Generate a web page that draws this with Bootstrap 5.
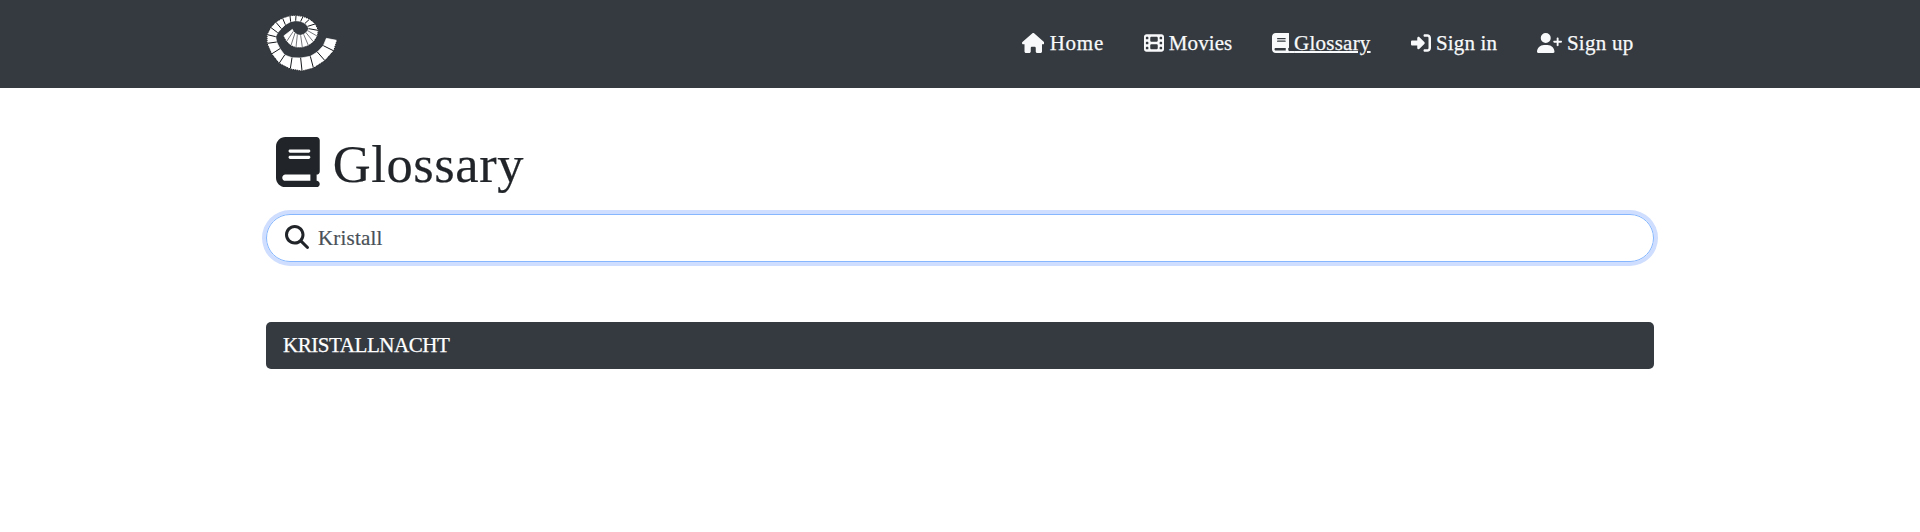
<!DOCTYPE html>
<html lang="en">
<head>
<meta charset="utf-8">
<meta name="viewport" content="width=device-width, initial-scale=1">
<title>Glossary</title>
<link href="https://cdn.jsdelivr.net/npm/bootstrap@5.3.0/dist/css/bootstrap.min.css" rel="stylesheet">
<style>
  body { font-family: Georgia, "Liberation Serif", serif; font-size: 21px; line-height: 30px; background: #fff; color: #212529; }
  .page-wrap { width: 1388px; max-width: 100%; margin: 0 auto; }
  .site-bar { background: #343a40; height: 88px; }
  .site-logo { width: 84px; height: 70px; margin: -2px 0 0 -6px; display: block; }
  .site-links { gap: 40px; padding-right: 21px; margin-bottom: 2px; -webkit-text-stroke: .25px; }
  .site-link { color: #f8f9fa; text-decoration: none; display: flex; white-space: pre; }
  .site-link svg { height: 20px; flex: none; margin-top: 5px; fill: currentColor; }
  .site-link span { display: block; padding-left: 5.3px; margin-right: -.5px; }
  .site-link.active span { text-decoration: underline; text-decoration-thickness: 2px; text-underline-offset: 1px; }
  .page-title { font-size: 52.5px; line-height: 58px; letter-spacing: .6px; font-weight: 400; margin: 47px 0 0; padding-left: 10px; -webkit-text-stroke: .2px; }
  .page-title svg { width: 43.75px; height: 50px; margin-right: 13px; margin-top: 2px; }
  .search-box { height: 48px; margin-top: 21px; border: 1px solid #86b7fe; border-radius: 24px; box-shadow: 0 0 0 4px #cfdefe; padding-left: 18px; }
  .search-box svg { margin-bottom: 2px; }
  .search-box input { border: 0; outline: 0; background: none; color: #495057; letter-spacing: .2px; padding: 0 0 0 9px; flex: 1; -webkit-text-stroke: .2px; }
  .term { height: 47px; margin-top: 60px; background: #343a40; color: #fff; border-radius: 5px; padding: 0 0 2px 17px; letter-spacing: -.44px; -webkit-text-stroke: .25px; }
</style>
</head>
<body>
<nav class="site-bar">
  <div class="page-wrap h-100 d-flex align-items-center justify-content-between">
    <a href="#" aria-label="Start page">
      <svg class="site-logo" viewBox="0 0 252 210">
        <path fill="#fff" stroke="#fff" stroke-width="2" d="M230 97L220 128L194 157L160 179L126 188L91 182L58 165L36 137L22 106L22 80L33 59L48 43L68 31L90 24L108 23L129 26L148 34L165 48L174 67L171 84L160 101L145 112L127 118L108 118L93 112L80 100L71 84L97 64L100 70L105 75L112 80L122 82L131 79L138 74L143 68L146 62L143 55L135 46L122 40L107 38L92 41L76 50L64 62L53 74L47 86L50 102L60 122L74 141L96 149L122 150L151 145L172 132L190 113L199 91Z"/>
        <path fill="none" stroke="#15181b" stroke-width="3" d="M220 128L190 113M194 157L172 132M160 179L151 145M126 188L122 150M91 182L96 149M58 165L74 141M36 137L60 122M22 106L50 102M22 80L47 86M33 59L53 74M48 43L64 62M68 31L76 50M90 24L92 41M108 23L107 38M129 26L122 40M148 34L135 46M165 48L143 55M174 67L146 62"/>
        <path fill="none" stroke="#30343a" stroke-width="2" d="M171 84L143 68M160 101L138 74M145 112L131 79M127 118L122 82M108 118L112 80M93 112L105 75M80 100L100 70"/>
        <path fill="none" stroke="#15181b" stroke-width="3" stroke-dasharray="3 3" d="M231 97L221 129L195 158L161 180L126 189L91 183L57 166L35 138L21 106L21 80L32 58L47 42L68 30L90 23L108 22L129 25L149 33L166 47L175 67L172 85L161 102L146 113L127 119L108 119L92 113L79 101L70 84"/>
      </svg>
    </a>
    <div class="site-links d-flex">
      <a class="site-link" href="#"><svg viewBox="0 0 576 512"><path d="M575.8 255.5c0 18-15 32.1-32 32.1h-32l.7 160.2c0 2.7-.2 5.4-.5 8.1V472c0 22.1-17.9 40-40 40H456c-1.1 0-2.2 0-3.3-.1c-1.4 .1-2.8 .1-4.2 .1H416 392c-22.1 0-40-17.9-40-40V448 384c0-17.7-14.3-32-32-32H256c-17.7 0-32 14.3-32 32v64 24c0 22.1-17.9 40-40 40H160 128.1c-1.5 0-3-.1-4.5-.2c-1.2 .1-2.4 .2-3.6 .2H104c-22.1 0-40-17.9-40-40V360c0-.9 0-1.9 .1-2.8V287.6H32c-18 0-32-14-32-32.1c0-9 3-17 10-24L266.4 8c7-7 15-8 22-8s15 2 21 7L564.8 231.5c8 7 12 15 11 24z"/></svg><span style="letter-spacing:.77px">Home</span></a>
      <a class="site-link" href="#"><svg viewBox="0 0 512 512"><path d="M0 96C0 60.7 28.7 32 64 32H448c35.3 0 64 28.7 64 64V416c0 35.3-28.7 64-64 64H64c-35.3 0-64-28.7-64-64V96zM48 368v32c0 8.8 7.2 16 16 16H96c8.8 0 16-7.2 16-16V368c0-8.8-7.2-16-16-16H64c-8.8 0-16 7.2-16 16zm368-16c-8.8 0-16 7.2-16 16v32c0 8.8 7.2 16 16 16h32c8.8 0 16-7.2 16-16V368c0-8.8-7.2-16-16-16H416zM48 240v32c0 8.8 7.2 16 16 16H96c8.8 0 16-7.2 16-16V240c0-8.8-7.2-16-16-16H64c-8.8 0-16 7.2-16 16zm368-16c-8.8 0-16 7.2-16 16v32c0 8.8 7.2 16 16 16h32c8.8 0 16-7.2 16-16V240c0-8.8-7.2-16-16-16H416zM48 112v32c0 8.8 7.2 16 16 16H96c8.8 0 16-7.2 16-16V112c0-8.8-7.2-16-16-16H64c-8.8 0-16 7.2-16 16zM416 96c-8.8 0-16 7.2-16 16v32c0 8.8 7.2 16 16 16h32c8.8 0 16-7.2 16-16V112c0-8.8-7.2-16-16-16H416zM160 128v64c0 17.7 14.3 32 32 32H320c17.7 0 32-14.3 32-32V128c0-17.7-14.3-32-32-32H192c-17.7 0-32 14.3-32 32zm32 160c-17.7 0-32 14.3-32 32v64c0 17.7 14.3 32 32 32H320c17.7 0 32-14.3 32-32V320c0-17.7-14.3-32-32-32H192z"/></svg><span style="letter-spacing:.07px">Movies</span></a>
      <a class="site-link active" href="#"><svg viewBox="0 0 448 512"><path d="M96 0C43 0 0 43 0 96V416c0 53 43 96 96 96H384h32c17.7 0 32-14.3 32-32s-14.3-32-32-32V384c17.7 0 32-14.3 32-32V32c0-17.7-14.3-32-32-32H384 96zm0 384H352v64H96c-17.7 0-32-14.3-32-32s14.3-32 32-32zm32-240c0-8.8 7.2-16 16-16H336c8.8 0 16 7.2 16 16s-7.2 16-16 16H144c-8.8 0-16-7.2-16-16zm16 48H336c8.8 0 16 7.2 16 16s-7.2 16-16 16H144c-8.8 0-16-7.2-16-16s7.2-16 16-16z"/></svg><span class="m-0" style="letter-spacing:.23px;padding:0"><span class="d-inline m-0" style="letter-spacing:-.45px;padding:0"> </span>Glossary</span></a>
      <a class="site-link" href="#"><svg viewBox="0 0 512 512"><path d="M217.9 105.9L340.7 228.7c7.2 7.2 11.3 17.1 11.3 27.3s-4.1 20.1-11.3 27.3L217.9 406.1c-6.4 6.4-15 9.9-24 9.9c-18.7 0-33.9-15.2-33.9-33.9l0-62.1L32 320c-17.7 0-32-14.3-32-32l0-64c0-17.7 14.3-32 32-32l128 0 0-62.1c0-18.7 15.2-33.9 33.9-33.9c9 0 17.6 3.6 24 9.9zM352 416l64 0c17.7 0 32-14.3 32-32l0-256c0-17.7-14.3-32-32-32l-64 0c-17.7 0-32-14.3-32-32s14.3-32 32-32l64 0c53 0 96 43 96 96l0 256c0 53-43 96-96 96l-64 0c-17.7 0-32-14.3-32-32s14.3-32 32-32z"/></svg><span style="letter-spacing:.16px">Sign in</span></a>
      <a class="site-link" href="#"><svg viewBox="0 0 640 512"><path d="M96 128a128 128 0 1 1 256 0A128 128 0 1 1 96 128zM0 482.3C0 383.8 79.8 304 178.3 304h91.4C368.2 304 448 383.8 448 482.3c0 16.4-13.3 29.7-29.7 29.7H29.7C13.3 512 0 498.7 0 482.3zM504 312V248H440c-13.3 0-24-10.7-24-24s10.7-24 24-24h64V136c0-13.3 10.7-24 24-24s24 10.7 24 24v64h64c13.3 0 24 10.7 24 24s-10.7 24-24 24H552v64c0 13.3-10.7 24-24 24s-24-10.7-24-24z"/></svg><span style="letter-spacing:.26px">Sign up</span></a>
    </div>
  </div>
</nav>
<main class="page-wrap">
  <h1 class="page-title d-flex"><svg viewBox="0 0 448 512" fill="currentColor"><path d="M96 0C43 0 0 43 0 96V416c0 53 43 96 96 96H384h32c17.7 0 32-14.3 32-32s-14.3-32-32-32V384c17.7 0 32-14.3 32-32V32c0-17.7-14.3-32-32-32H384 96zm0 384H352v64H96c-17.7 0-32-14.3-32-32s14.3-32 32-32zm32-240c0-8.8 7.2-16 16-16H336c8.8 0 16 7.2 16 16s-7.2 16-16 16H144c-8.8 0-16-7.2-16-16zm16 48H336c8.8 0 16 7.2 16 16s-7.2 16-16 16H144c-8.8 0-16-7.2-16-16s7.2-16 16-16z"/></svg>Glossary</h1>
  <div class="search-box d-flex align-items-center">
    <svg width="24" height="24" viewBox="0 0 512 512" fill="currentColor"><path d="M416 208c0 45.9-14.9 88.3-40 122.7L502.6 457.4c12.5 12.5 12.5 32.8 0 45.3s-32.8 12.5-45.3 0L330.7 376c-34.4 25.2-76.8 40-122.7 40C93.1 416 0 322.9 0 208S93.1 0 208 0S416 93.1 416 208zM208 352a144 144 0 1 0 0-288 144 144 0 1 0 0 288z"/></svg>
    <input type="text" value="Kristall" aria-label="Search the glossary">
  </div>
  <div class="term d-flex align-items-center">KRISTALLNACHT</div>
</main>
<script src="https://cdn.jsdelivr.net/npm/bootstrap@5.3.0/dist/js/bootstrap.bundle.min.js"></script>
</body>
</html>
